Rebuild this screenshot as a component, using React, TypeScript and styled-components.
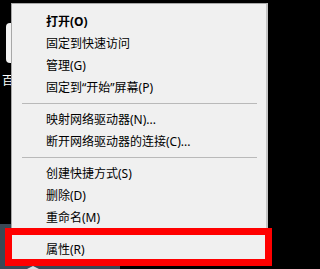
import styled, { createGlobalStyle } from "styled-components";

const GlobalStyle = createGlobalStyle`
  html, body {
    margin: 0;
    padding: 0;
    background: #000;
  }
`;

type Entry =
  | { kind: "item"; label: string; bold?: boolean }
  | { kind: "sep" };

const entries: Entry[] = [
  { kind: "item", label: "打开(O)", bold: true },
  { kind: "item", label: "固定到快速访问" },
  { kind: "item", label: "管理(G)" },
  { kind: "item", label: "固定到“开始”屏幕(P)" },
  { kind: "sep" },
  { kind: "item", label: "映射网络驱动器(N)..." },
  { kind: "item", label: "断开网络驱动器的连接(C)..." },
  { kind: "sep" },
  { kind: "item", label: "创建快捷方式(S)" },
  { kind: "item", label: "删除(D)" },
  { kind: "item", label: "重命名(M)" },
  { kind: "sep" },
  { kind: "item", label: "属性(R)" },
];

export default function App() {
  return (
    <>
      <GlobalStyle />
      <Desktop>
        <IconSliver />
        <IconLabel>百</IconLabel>
        <Taskbar>
          <Notch />
        </Taskbar>
        <Menu>
          {entries.map((e, i) =>
            e.kind === "sep" ? (
              <Separator key={i} />
            ) : (
              <Item key={i} $bold={e.bold}>
                {e.label}
              </Item>
            )
          )}
        </Menu>
        <Highlight />
      </Desktop>
    </>
  );
}

const Desktop = styled.div`
  position: relative;
  width: 278px;
  height: 269px;
  overflow: hidden;
  background: #000;
  display: flex;
  align-items: flex-start;
  padding: 3px 0 0 11px;
  box-sizing: border-box;
`;

const Menu = styled.div`
  position: relative;
  z-index: 1;
  width: 257px;
  box-sizing: border-box;
  background: #f0f0f0;
  border: 1px solid #a8a8a8;
  border-right: 2px solid #c4c4c4;
  padding: 6px 0 4px;
  display: flex;
  flex-direction: column;
`;

const Item = styled.div<{ $bold?: boolean }>`
  height: 22px;
  display: flex;
  align-items: center;
  padding-left: 34px;
  font-family: "Noto Sans", "Noto Sans CJK SC", sans-serif;
  font-size: 12px;
  font-weight: ${(p) => (p.$bold ? 700 : 400)};
  color: #000;
  white-space: nowrap;
`;

const Separator = styled.div`
  height: 1px;
  background: #b9b9b9;
  margin: 5px 9px 4px 10px;
`;

const Highlight = styled.div`
  position: absolute;
  z-index: 2;
  left: 5px;
  top: 228px;
  width: 267px;
  height: 38px;
  box-sizing: border-box;
  border: 7px solid #ff0000;
`;

const Taskbar = styled.div`
  position: absolute;
  left: 0;
  top: 224px;
  width: 120px;
  height: 45px;
  background: #3a4956;
`;

const Notch = styled.div`
  position: absolute;
  left: 27px;
  bottom: 0;
  width: 0;
  height: 0;
  border-left: 6px solid transparent;
  border-right: 6px solid transparent;
  border-bottom: 3px solid #d8dde2;
`;

const IconSliver = styled.div`
  position: absolute;
  left: 6px;
  top: 23px;
  width: 10px;
  height: 40px;
  border-radius: 4px;
  background: #f2f2f2;
`;

const IconLabel = styled.div`
  position: absolute;
  left: 2px;
  top: 71px;
  font-family: "Noto Sans CJK SC", sans-serif;
  font-size: 12px;
  color: #fff;
`;
